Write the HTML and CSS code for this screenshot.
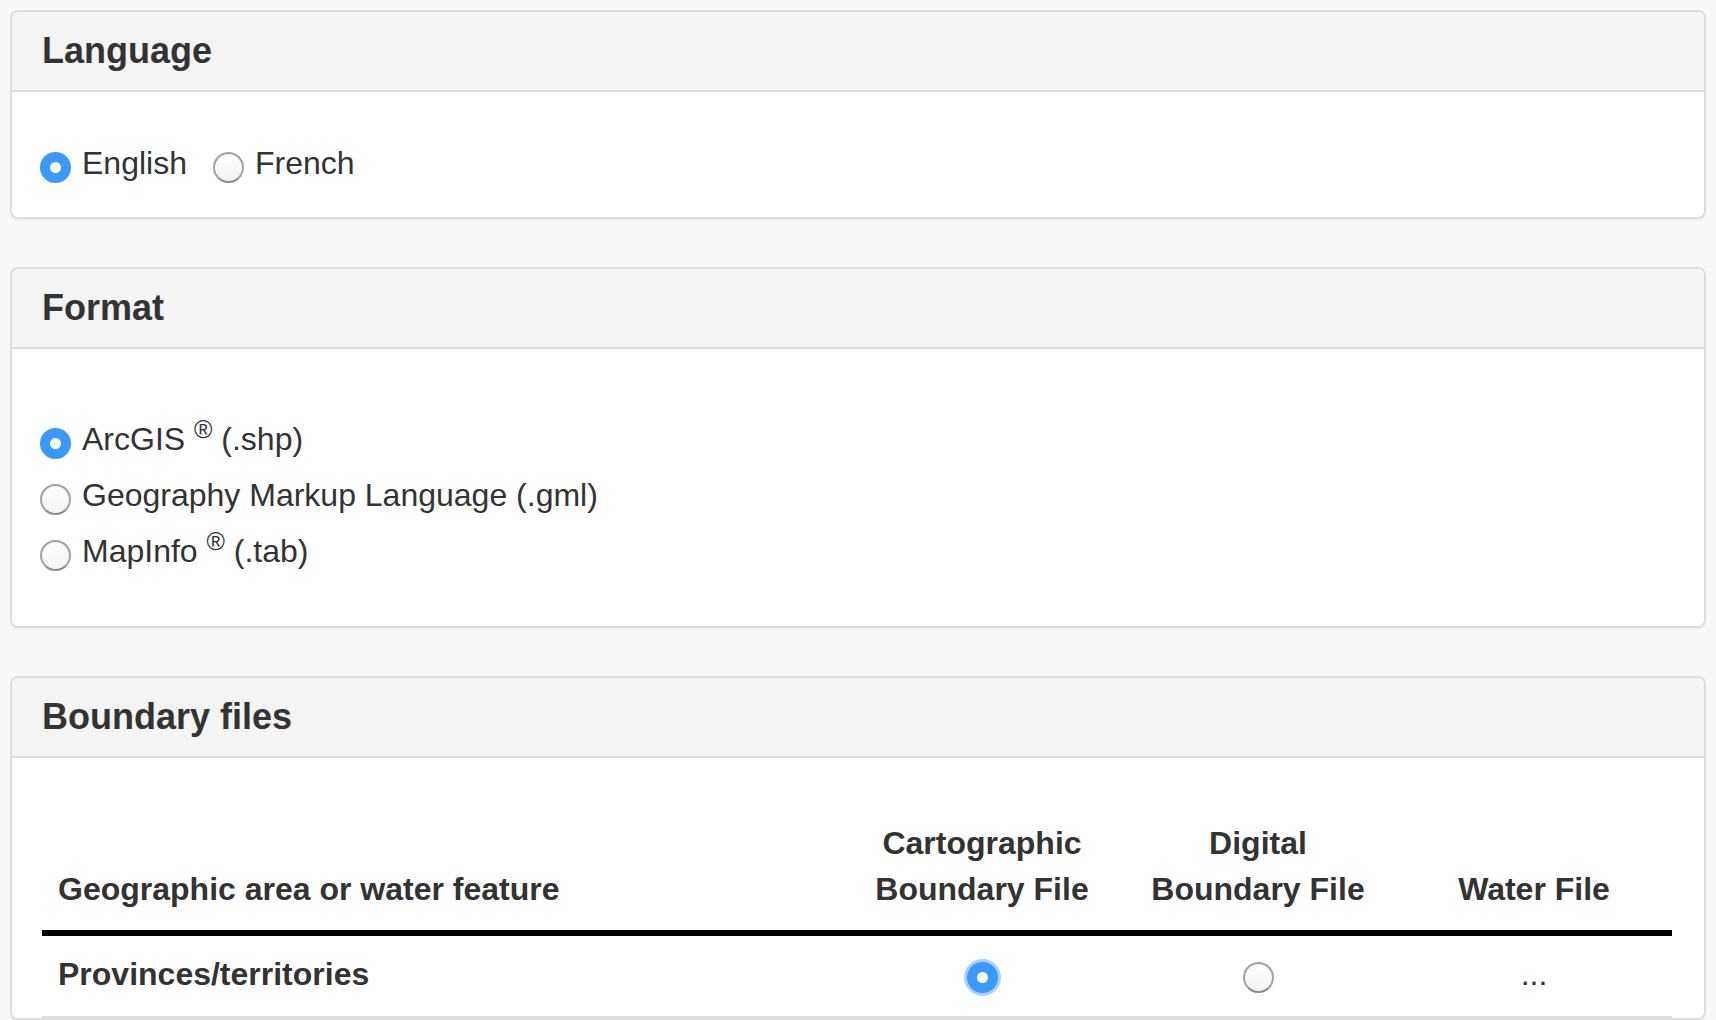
FILE: index.html
```html
<!DOCTYPE html>
<html lang="en">
<head>
<meta charset="utf-8">
<title>Boundary files download</title>
<link rel="stylesheet" href="styles.css">
</head>
<body>
<section class="panel">
  <header class="panel-heading"><h3 class="panel-title">Language</h3></header>
  <div class="panel-body body-language">
    <div class="inline-group">
      <label class="opt"><span class="radio checked"></span><span>English</span></label>
      <label class="opt opt-gap"><span class="radio"></span><span>French</span></label>
    </div>
  </div>
</section>

<section class="panel">
  <header class="panel-heading"><h3 class="panel-title">Format</h3></header>
  <div class="panel-body body-format">
    <div class="stack">
      <label class="opt"><span class="radio checked"></span><span>ArcGIS <sup>®</sup> (.shp)</span></label>
      <label class="opt"><span class="radio"></span><span>Geography Markup Language (.gml)</span></label>
      <label class="opt"><span class="radio"></span><span>MapInfo <sup>®</sup> (.tab)</span></label>
    </div>
  </div>
</section>

<section class="panel">
  <header class="panel-heading"><h3 class="panel-title">Boundary files</h3></header>
  <div class="panel-body body-boundary">
    <table class="files">
      <colgroup>
        <col>
        <col class="c-file">
        <col class="c-file">
        <col class="c-file">
      </colgroup>
      <thead>
        <tr>
          <th class="th-left">Geographic area or water feature</th>
          <th>Cartographic<br>Boundary File</th>
          <th>Digital<br>Boundary File</th>
          <th>Water File</th>
        </tr>
      </thead>
      <tbody>
        <tr>
          <th class="th-left" scope="row">Provinces/territories</th>
          <td><span class="radio checked focus cell-radio"></span></td>
          <td><span class="radio cell-radio"></span></td>
          <td class="dots">...</td>
        </tr>
      </tbody>
    </table>
  </div>
</section>
</body>
</html>
```

FILE: styles.css
```css
html, body {
  margin: 0;
  padding: 0;
}

body {
  background: #f8f8f8;
  padding: 10px 10px 0 10px;
  font-family: "Liberation Sans", Arial, Helvetica, sans-serif;
  font-size: 32px;
  line-height: 46px;
  color: #333;
}

.panel {
  background: #fff;
  border: 2px solid #ddd;
  border-radius: 8px;
  margin-bottom: 48px;
  box-shadow: 0 2px 2px rgba(0, 0, 0, 0.04);
  overflow: hidden;
}

.panel-heading {
  background: #f4f4f4;
  border-bottom: 2px solid #ddd;
  padding: 19px 30px;
}

.panel-title {
  margin: 0;
  font-size: 36px;
  line-height: 40px;
  font-weight: bold;
  color: #333;
}

.panel-body {
  padding: 30px;
}

.body-language {
  padding-top: 48px;
  padding-bottom: 31px;
}

.body-format {
  padding-top: 67px;
  padding-bottom: 52px;
}

.body-boundary {
  padding-top: 46px;
  padding-bottom: 0;
}

.inline-group {
  display: flex;
}

.stack {
  display: flex;
  flex-direction: column;
  gap: 10px;
}

.opt {
  display: flex;
  align-items: flex-start;
  cursor: pointer;
}

.opt-gap {
  margin-left: 28px;
}

.opt .radio {
  margin-left: -2px;
  margin-right: 11px;
  margin-top: 12px;
  flex: none;
}

.radio {
  display: inline-block;
  box-sizing: border-box;
  width: 31px;
  height: 31px;
  border-radius: 50%;
  border: 2px solid #a2a2a2;
  border-bottom-color: #8c8c8c;
  background: linear-gradient(#ffffff, #f3f3f3);
  box-shadow: inset 0 1px 1px rgba(0, 0, 0, 0.06);
}

.radio.checked {
  border: 10.5px solid #3b99fc;
  background: #fff;
  box-shadow: none;
}

.radio.focus {
  box-shadow: 0 0 0 3px rgba(59, 153, 252, 0.45);
}

sup {
  font-size: 78%;
  line-height: 0;
  position: relative;
  top: -0.5em;
  vertical-align: baseline;
}

.files {
  width: calc(100% - 2px);
  border-collapse: collapse;
}

.c-file {
  width: 276px;
}

.files th,
.files td {
  text-align: center;
}

.files thead th {
  font-weight: bold;
  vertical-align: bottom;
  padding: 16px 16px 18px;
  border-bottom: 6px solid #000;
}

.files tbody th,
.files tbody td {
  vertical-align: top;
  padding: 15px 16px 19px;
  border-bottom: 2px solid #ddd;
}

.files .th-left {
  text-align: left;
  font-weight: bold;
}

.cell-radio {
  vertical-align: top;
  margin-top: 11px;
}

.dots {
  color: #333;
}
```
